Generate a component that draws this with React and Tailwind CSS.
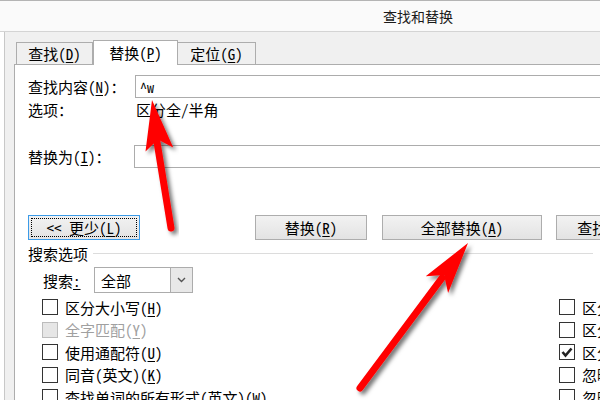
import React from 'react';

const cjk = "font-['Noto_Sans_Mono_CJK_SC','Noto_Sans_CJK_SC','Noto_Sans',sans-serif]";

const U = ({ children }) => <span className="underline underline-offset-2">{children}</span>;

const Btn = ({ children, className = '' }) => (
   <div
      className={`h-[25px] shrink-0 flex items-center justify-center border border-[#adadad] bg-linear-to-b from-[#f2f2f2] to-[#e3e3e3] ${className}`}
   >
      {children}
   </div>
);

const Box = ({ checked, disabled }) => (
   <span
      className={`w-[16px] h-[16px] shrink-0 flex items-center justify-center border ${
         disabled ? 'border-[#bcbcbc] bg-[#e6e6e6]' : 'border-[#333333] bg-white'
      }`}
   >
      {checked && (
         <svg width="12" height="12" viewBox="0 0 12 12">
            <path d="M1.5 6 L4.5 9.5 L10.5 2.5" fill="none" stroke="#222" strokeWidth="2.6" />
         </svg>
      )}
   </span>
);

const Check = ({ label, checked, disabled }) => (
   <div className="h-[22.5px] flex items-center whitespace-nowrap">
      <Box checked={checked} disabled={disabled} />
      <span className={`ml-[7px] ${disabled ? 'text-[#a0a0a0]' : ''}`}>{label}</span>
   </div>
);

const Arrow = ({ shaft, head }) => (
   <g filter="url(#shadow)">
      <line
         x1={shaft[0]}
         y1={shaft[1]}
         x2={shaft[2]}
         y2={shaft[3]}
         stroke="#ff0000"
         strokeWidth="7"
         strokeLinecap="round"
      />
      <polygon points={head} fill="#ff0000" />
   </g>
);

const App = () => {
   return (
      <div className={`relative w-[600px] h-[400px] overflow-hidden bg-white text-black ${cjk}`}>
         {/* Title bar */}
         <div className="h-[32px] border-t border-b border-t-[#b4b4b4] border-b-[#d4d4d4] bg-[#fafafa] flex items-center pl-[383px] text-[14px] text-[#1a1a1a] font-['Noto_Sans_CJK_SC',sans-serif]">
            查找和替换
         </div>

         {/* Client area */}
         <div className="ml-[4px] h-[368px] border-l border-[#c8c8c8] bg-[#f0f0f0] pt-[8px] text-[15px] leading-none">
            {/* Tabs */}
            <div className="relative z-10 ml-[11px] h-[24px] flex items-end">
               <div className="w-[77px] h-[22px] border border-b-0 border-[#adadad] bg-[#f0f0f0] flex items-center justify-center">
                  查找(<U>D</U>)
               </div>
               <div className="w-[85px] h-[25px] -mb-[1px] border border-b-0 border-[#adadad] bg-white flex items-center justify-center pb-[1px]">
                  替换(<U>P</U>)
               </div>
               <div className="w-[78px] h-[22px] border border-b-0 border-l-0 border-[#adadad] bg-[#f0f0f0] flex items-center justify-center">
                  定位(<U>G</U>)
               </div>
            </div>

            {/* Panel */}
            <div className="ml-[9px] w-[700px] h-[340px] border-l border-t border-[#adadad] bg-white pt-[10px] pl-[13px]">
               <div className="flex items-center h-[23px]">
                  <span className="w-[107px]">
                     查找内容(<U>N</U>)：
                  </span>
                  <div className="w-[480px] h-[23px] border border-[#acacac] flex items-center pl-[4px] text-[14px]">
                     ^w
                  </div>
               </div>
               <div className="flex items-center h-[22px]">
                  <span className="w-[108px]">选项：</span>
                  <span>区分全/半角</span>
               </div>

               <div className="mt-[25px] flex items-center h-[23px]">
                  <span className="w-[106px]">
                     替换为(<U>I</U>)：
                  </span>
                  <div className="w-[480px] h-[23px] border border-[#acacac]" />
               </div>

               {/* Buttons */}
               <div className="mt-[47px] flex">
                  <div className="w-[112px] h-[25px] shrink-0 border border-[#3c9be8] bg-linear-to-b from-[#f2f2f2] to-[#e3e3e3] p-[2px]">
                     <div className="w-full h-full border border-dotted border-black flex items-center justify-center">
                        &lt;&lt; 更少(<U>L</U>)
                     </div>
                  </div>
                  <Btn className="ml-[115px] w-[112px]">
                     替换(<U>R</U>)
                  </Btn>
                  <Btn className="ml-[15px] w-[160px]">
                     全部替换(<U>A</U>)
                  </Btn>
                  <Btn className="ml-[14px] w-[140px]">
                     查找下一处(<U>F</U>)
                  </Btn>
               </div>

               {/* Search options */}
               <div className="mt-[5px] h-[16px] flex items-center">
                  <span>搜索选项</span>
                  <div className="ml-[5px] w-[500px] h-px bg-[#dcdcdc]" />
               </div>

               <div className="mt-[6px] ml-[15px] flex items-center h-[26px]">
                  <span className="w-[51px]">
                     搜索<U>:</U>
                  </span>
                  <div className="w-[99px] h-[26px] border border-[#acacac] flex">
                     <span className="flex-1 flex items-center pl-[6px]">全部</span>
                     <span className="w-[22px] h-full border-l border-[#acacac] bg-[#e8e8e8] flex items-center justify-center">
                        <svg width="9" height="6" viewBox="0 0 9 6">
                           <path d="M1 1 L4.5 4.5 L8 1" fill="none" stroke="#555" strokeWidth="1.4" />
                        </svg>
                     </span>
                  </div>
               </div>

               <div className="mt-[3px] ml-[14px] flex">
                  <div className="w-[517px] shrink-0">
                     <Check label={<>区分大小写(<U>H</U>)</>} />
                     <Check label={<>全字匹配(<U>Y</U>)</>} disabled />
                     <Check label={<>使用通配符(<U>U</U>)</>} />
                     <Check label={<>同音(英文)(<U>K</U>)</>} />
                     <Check label={<>查找单词的所有形式(英文)(<U>W</U>)</>} />
                  </div>
                  <div className="shrink-0">
                     <Check label={<>区分前缀(<U>X</U>)</>} />
                     <Check label={<>区分后缀(<U>T</U>)</>} />
                     <Check label={<>区分全/半角(<U>M</U>)</>} checked />
                     <Check label={<>忽略标点符号(<U>S</U>)</>} />
                     <Check label={<>忽略空格(<U>W</U>)</>} />
                  </div>
               </div>
            </div>
         </div>

         {/* Annotation arrows */}
         <svg className="absolute inset-0 pointer-events-none" width="600" height="400">
            <defs>
               <filter id="shadow" x="-20%" y="-20%" width="140%" height="140%">
                  <feDropShadow dx="3" dy="3" stdDeviation="2" floodColor="#000" floodOpacity="0.55" />
               </filter>
            </defs>
            <Arrow shaft={[157, 142, 171, 228]} head="152,100 173.2,147.4 157.9,139.6 145.5,151.5" />
            <Arrow shaft={[442, 278, 360, 388]} head="468,243 448.1,293.1 444.1,275.1 425.7,276.3" />
         </svg>
      </div>
   );
};

export default App;
